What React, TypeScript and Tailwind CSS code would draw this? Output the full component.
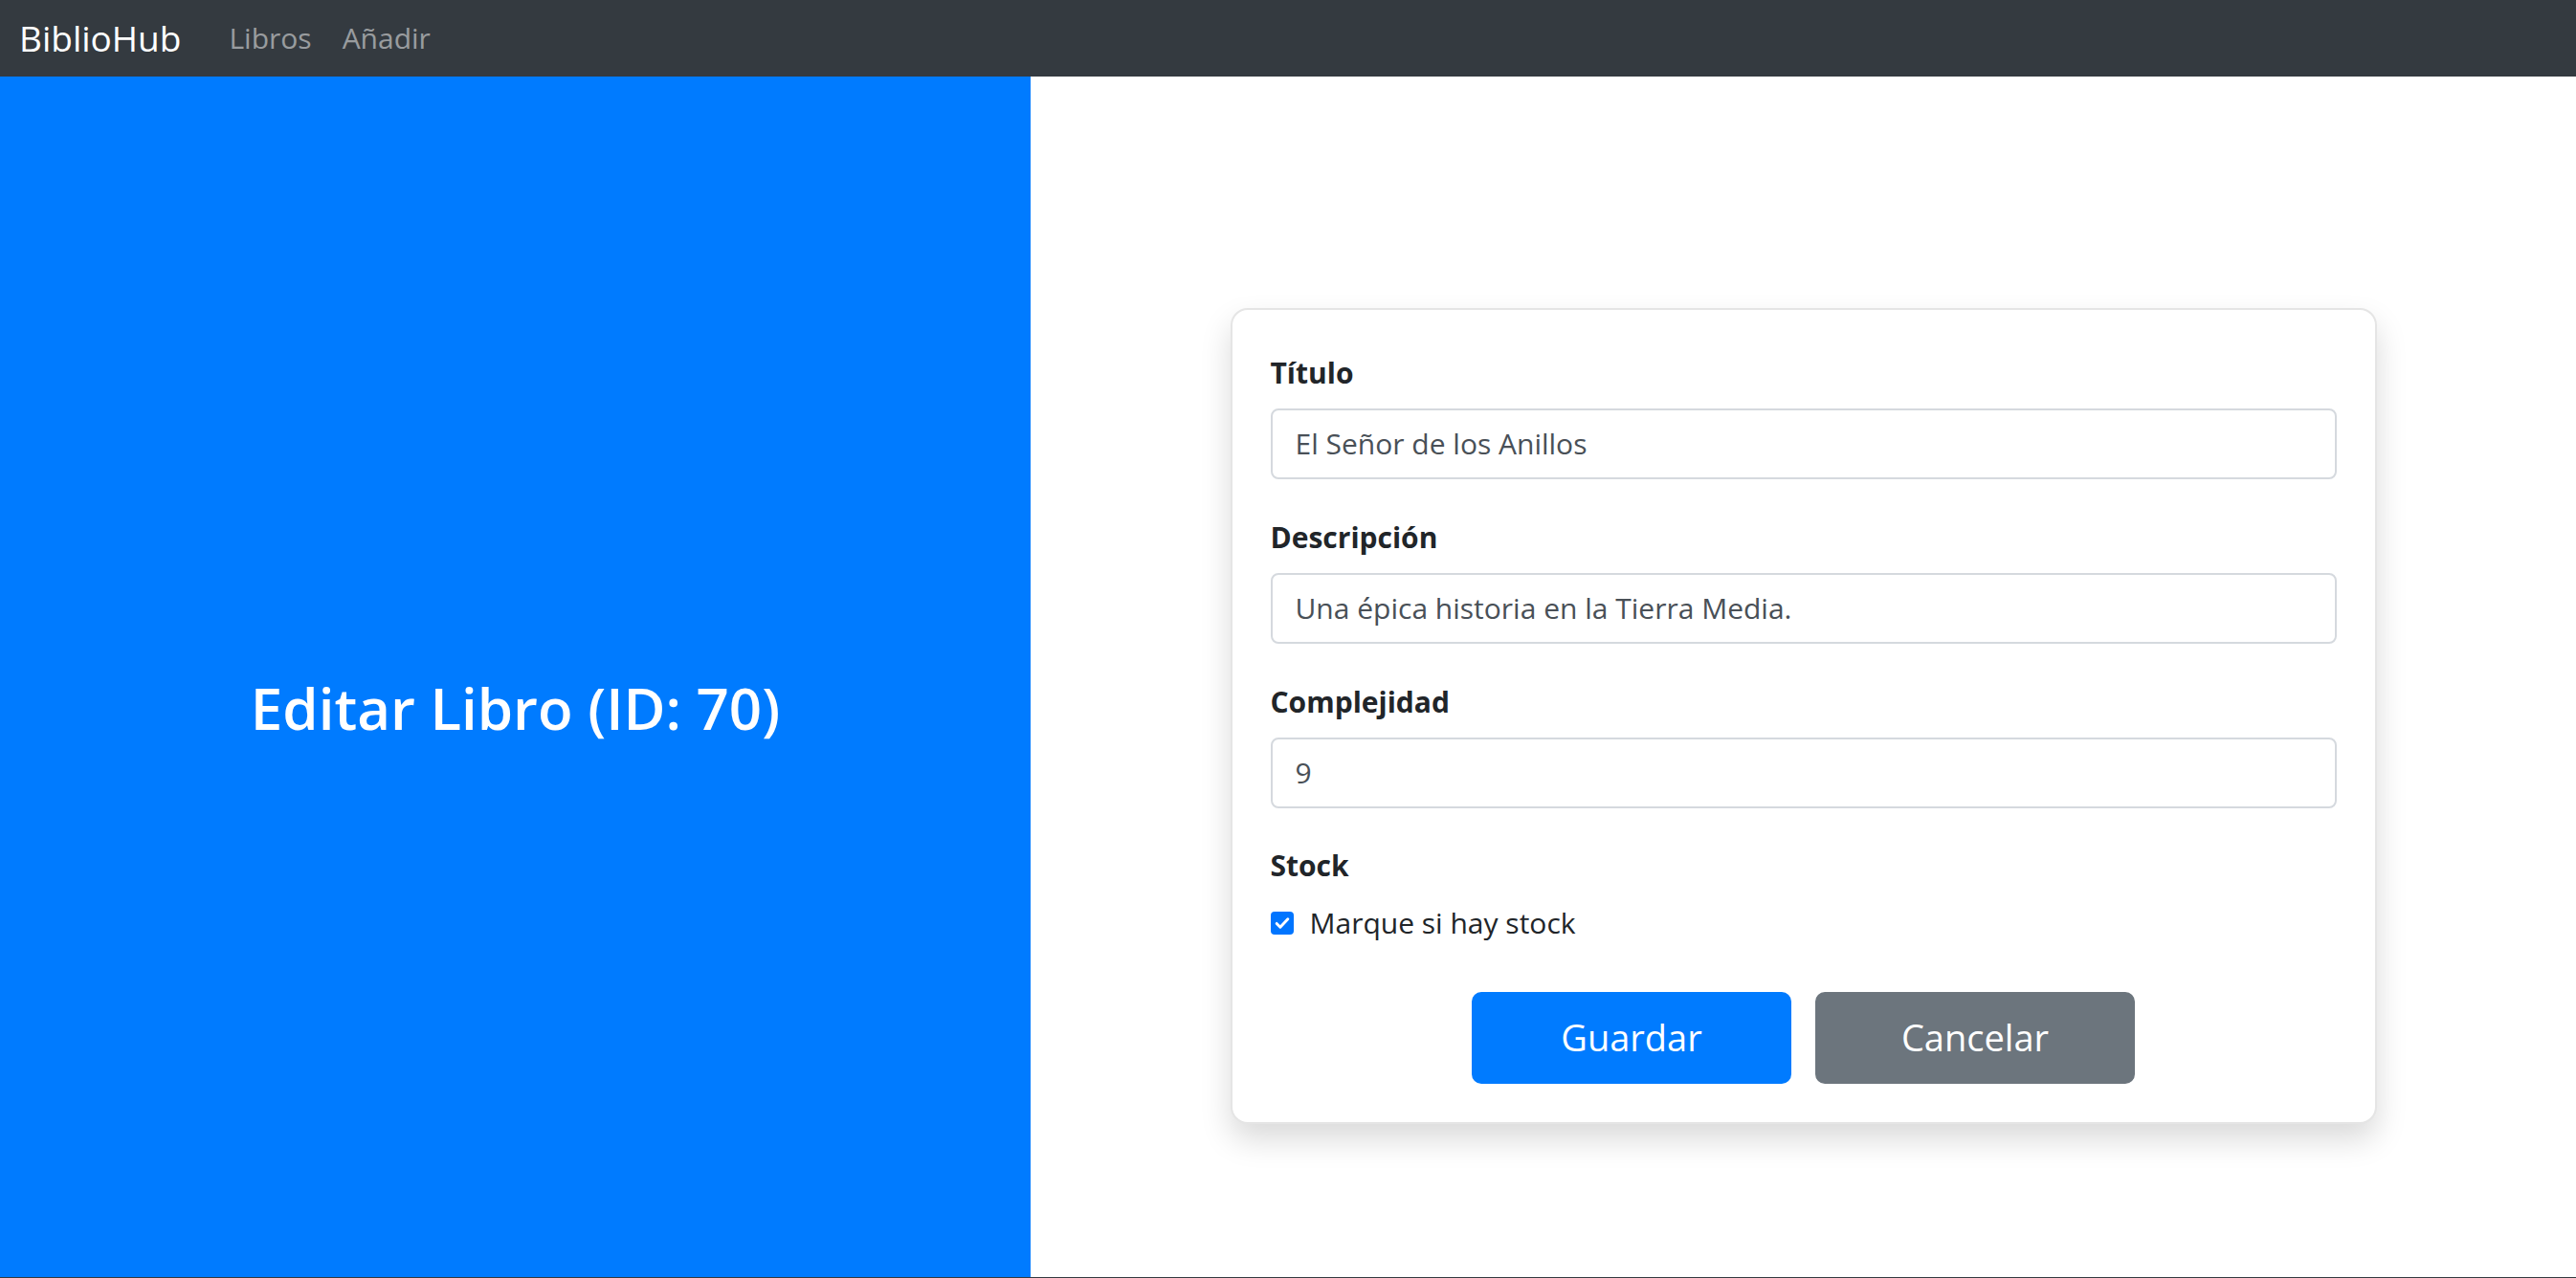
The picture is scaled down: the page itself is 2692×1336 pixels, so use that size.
function Field({ label, value }: { label: string; value: string }) {
  return (
    <div className="mb-[34px]">
      <label className="mb-[13px] block pt-[3px] text-[30px] font-bold leading-[48px] text-[#212529]">{label}</label>
      <input
        readOnly
        defaultValue={value}
        className="block h-[74px] w-full rounded-[8px] border-2 border-[#d5d9de] bg-white px-[24px] text-[30px] text-[#495057] outline-none"
      />
    </div>
  )
}

export default function App() {
  return (
    <div className="h-screen overflow-hidden border-b border-[#343a40] bg-white font-['Open_Sans',sans-serif]">
      {/* Navbar */}
      <nav className="flex h-[80px] items-center bg-[#343a40] pl-[20px]">
        <span className="mr-[34px] text-[37px] leading-[56px] text-white">BiblioHub</span>
        <a className="px-[16px] text-[30px] leading-[48px] text-white/50">Libros</a>
        <a className="px-[16px] text-[30px] leading-[48px] text-white/50">Añadir</a>
      </nav>

      <main className="flex h-[1336px]">
        {/* Left blue panel */}
        <section className="flex w-[1077px] shrink-0 items-center justify-center bg-[#007bff]">
          <h2 className="mb-4 text-[60px] font-semibold leading-[1.2] text-white">Editar Libro (ID: 70)</h2>
        </section>

        {/* Form */}
        <section className="flex flex-1 items-center justify-center">
          <form className="w-[1198px] rounded-[18px] border-2 border-black/10 bg-white px-[40px] pt-[39px] pb-[40px] shadow-[0_16px_32px_rgba(0,0,0,0.15)]">
            <Field label="Título" value="El Señor de los Anillos" />
            <Field label="Descripción" value="Una épica historia en la Tierra Media." />
            <Field label="Complejidad" value="9" />

            <div>
              <label className="mb-[12px] block pt-[2px] text-[30px] font-bold leading-[48px] text-[#212529]">Stock</label>
              <div className="flex h-[48px] items-center gap-[17px]">
                <span className="mt-[1px] flex h-[24px] w-[24px] items-center justify-center rounded-[4px] bg-[#0075ff]">
                  <svg viewBox="0 0 24 24" className="h-[20px] w-[20px]" fill="none">
                    <path d="M5 12.5l4.5 4.5L19 7" stroke="white" strokeWidth="3.5" strokeLinecap="round" strokeLinejoin="round" />
                  </svg>
                </span>
                <span className="text-[30px] text-[#212529]">Marque si hay stock</span>
              </div>
            </div>

            <div className="mt-[48px] flex justify-center gap-[25px]">
              <button
                type="button"
                className="h-[96px] w-[334px] rounded-[10px] border-2 border-[#007bff] bg-[#007bff] text-[38px] text-white"
              >
                Guardar
              </button>
              <button
                type="button"
                className="h-[96px] w-[334px] rounded-[10px] border-2 border-[#6c757d] bg-[#6c757d] text-[38px] text-white"
              >
                Cancelar
              </button>
            </div>
          </form>
        </section>
      </main>
    </div>
  )
}
